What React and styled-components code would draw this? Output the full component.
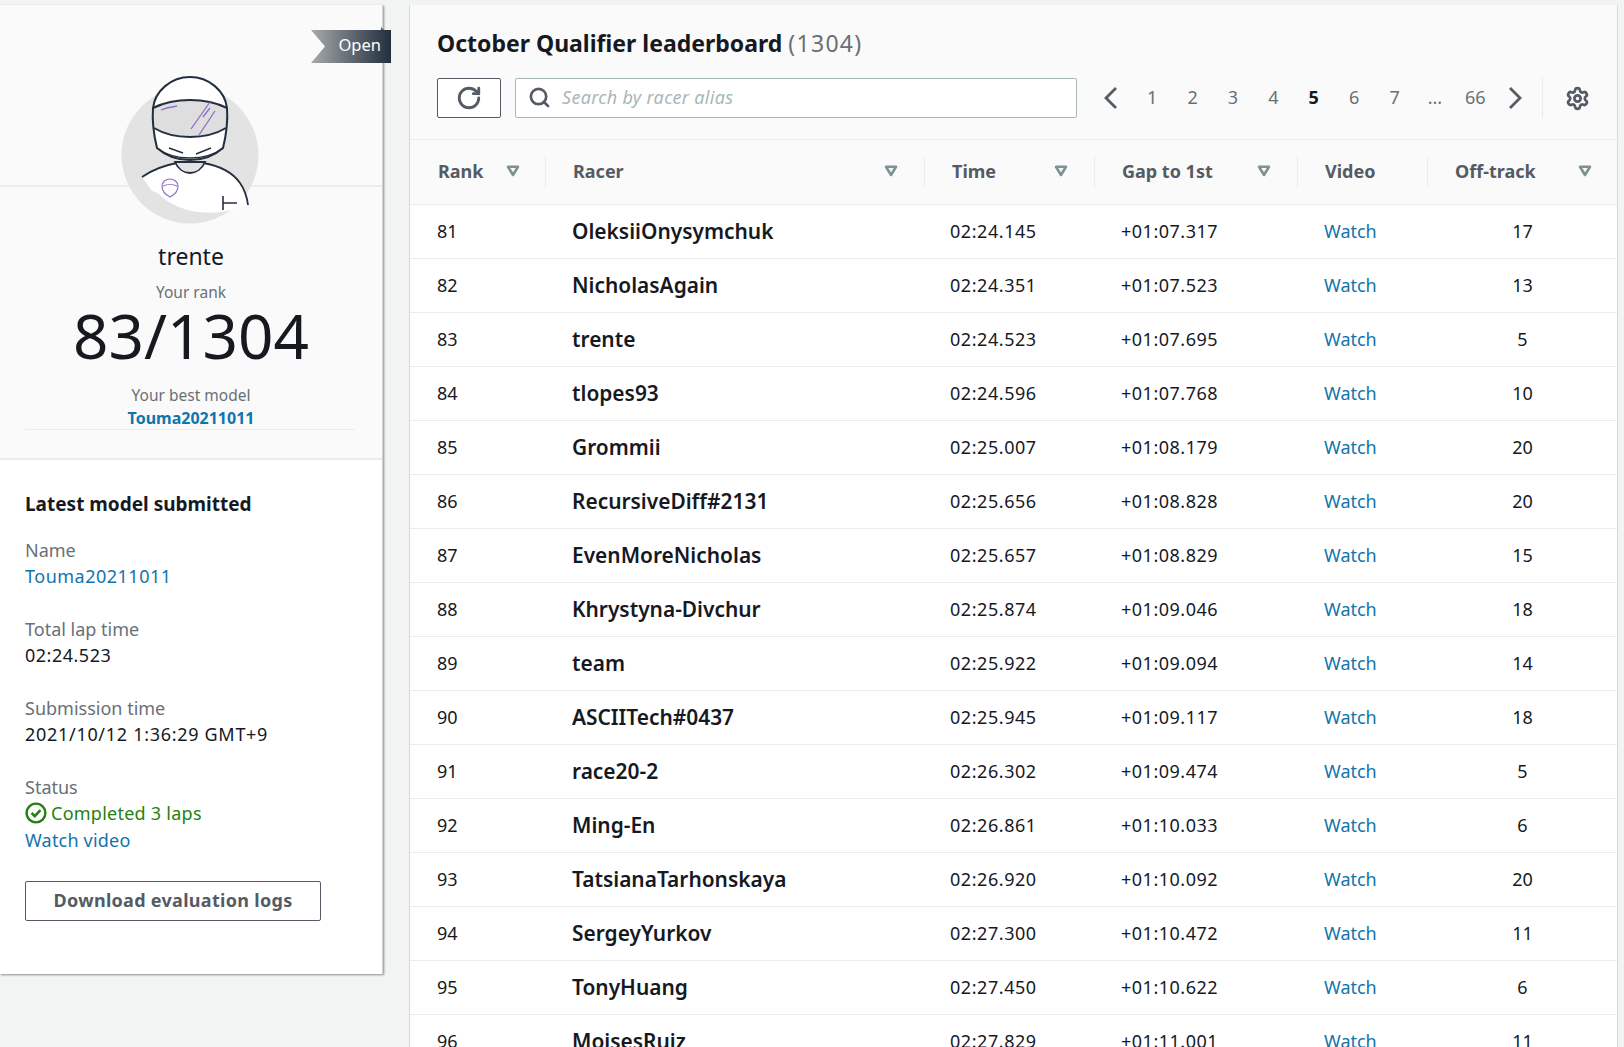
import styled, { createGlobalStyle } from 'styled-components'
import { RotateCw, Search, Settings } from 'lucide-react'

const GlobalStyle = createGlobalStyle`
  html, body {
    margin: 0;
    height: 100%;
    background: #f2f3f3;
    overflow: hidden;
  }
  * {
    box-sizing: border-box;
  }
  body {
    font-family: "Noto Sans", "Open Sans", sans-serif;
    color: #16191f;
  }
`

const Page = styled.div`
  display: flex;
  align-items: flex-start;
  gap: 26px;
  width: 1624px;
  height: 1047px;
  padding: 5px 6px 0 0;
  overflow: hidden;
`

const SidePanel = styled.aside`
  position: relative;
  flex: 0 0 383px;
  height: 969px;
  background: #fff;
  border-right: 1px solid #d0d3d4;
  box-shadow: 1px 1px 2px rgba(0, 28, 36, 0.45);
`

const Hero = styled.section`
  height: 455px;
  background: #fafafa;
  border-bottom: 2px solid #eaeded;
  display: flex;
  flex-direction: column;
  align-items: center;
`

const HeroBand = styled.div`
  align-self: stretch;
  flex: 0 0 182px;
  border-bottom: 2px solid #eaeded;
`

const Ribbon = styled.div`
  position: absolute;
  top: 25px;
  left: 311px;
  width: 80px;
  height: 33px;
  padding: 0 10px 4px 0;
  display: flex;
  align-items: center;
  justify-content: flex-end;
  font-size: 16.5px;
  color: #fff;
  background: linear-gradient(90deg, #a6abae 0%, #687078 45%, #232f3e 100%);
  clip-path: polygon(0 0, 100% 0, 100% 100%, 0 100%, 14px 50%);
`

const RibbonFold = styled.div`
  position: absolute;
  top: 22px;
  left: 381px;
  width: 0;
  height: 0;
  border-left: 3px solid #545b64;
  border-top: 3px solid transparent;
`

const AvatarBox = styled.div`
  position: absolute;
  top: 65px;
  left: 115px;
  width: 150px;
  height: 160px;
`

const Alias = styled.div`
  margin-top: 53px;
  font-size: 23px;
  line-height: 32px;
  color: #16191f;
`

const MutedLine = styled.div`
  margin-top: ${p => p.$top || 0}px;
  font-size: 15.5px;
  line-height: 22px;
  color: #687078;
`

const RankValue = styled.div`
  font-size: 62px;
  line-height: 64px;
  color: #16191f;
`

const BestModel = styled.a`
  margin-top: 1px;
  font-size: 16px;
  font-weight: 700;
  line-height: 22px;
  color: #1174ad;
`

const HeroDivider = styled.div`
  align-self: stretch;
  margin: 0 27px 0 25px;
  border-bottom: 1px solid #eaeded;
`

const Details = styled.section`
  padding: 30px 0 0 25px;
`

const DetailsTitle = styled.h2`
  margin: 0 0 19px;
  font-size: 19px;
  line-height: 28px;
  font-weight: 700;
  color: #16191f;
`

const Field = styled.div`
  margin-bottom: 27px;
  font-size: 18px;
  line-height: 26px;
`

const FieldLabel = styled.div`
  color: #687078;
`

const FieldValue = styled.div`
  color: #16191f;
  letter-spacing: ${p => p.$spacing || 0}px;
`

const TextLink = styled.a`
  color: #1174ad;
  letter-spacing: ${p => p.$spacing || 0}px;
`

const StatusLine = styled.div`
  display: flex;
  align-items: center;
  gap: 4px;
  margin-bottom: 1px;
  color: #257f12;
  letter-spacing: 0.25px;
`

const OutlineButton = styled.button`
  display: block;
  width: 296px;
  height: 40px;
  margin-top: 28px;
  padding: 0 0 3px;
  font-family: inherit;
  font-size: 18px;
  font-weight: 700;
  letter-spacing: 0.3px;
  color: #545b64;
  background: #fff;
  border: 1px solid #545b64;
  border-radius: 2px;
`

const Board = styled.main`
  flex: 1;
  height: 1042px;
  background: #fff;
  border-left: 1px solid #d5dbdb;
  border-right: 1px solid #d5dbdb;
  overflow: hidden;
`

const BoardHeader = styled.header`
  height: 135px;
  background: #fafafa;
  border-bottom: 1px solid #eaeded;
  padding: 22px 0 0 27px;
`

const BoardTitle = styled.h1`
  margin: 0;
  font-size: 23px;
  line-height: 32px;
  font-weight: 700;
  color: #16191f;
`

const TitleCount = styled.span`
  font-weight: 400;
  letter-spacing: 1.3px;
  color: #687078;
`

const Toolbar = styled.div`
  display: flex;
  align-items: center;
  margin-top: 19px;
`

const RefreshButton = styled.button`
  flex: 0 0 64px;
  height: 40px;
  display: flex;
  align-items: center;
  justify-content: center;
  color: #545b64;
  background: #fff;
  border: 1px solid #545b64;
  border-radius: 2px;
`

const SearchBox = styled.div`
  flex: 0 0 562px;
  height: 40px;
  margin-left: 14px;
  padding: 0 0 2px 12px;
  display: flex;
  align-items: center;
  gap: 11px;
  color: #545b64;
  background: #fff;
  border: 1px solid #aab7b8;
  border-radius: 2px;
`

const Placeholder = styled.span`
  font-size: 18px;
  font-style: italic;
  letter-spacing: 0.3px;
  color: #aab7b8;
`

const Pager = styled.nav`
  display: flex;
  align-items: center;
  margin-left: 19px;
  color: #545b64;
`

const PageNumber = styled.span`
  width: 40.4px;
  padding-bottom: 2px;
  text-align: center;
  font-size: 18px;
  font-weight: ${p => (p.$active ? 700 : 400)};
  color: ${p => (p.$active ? '#16191f' : '#687078')};
`

const ChevronBox = styled.svg`
  flex: 0 0 30px;
  margin: ${p => (p.$next ? '0 0 0 4px' : '0 6px 0 0')};
`

const ToolDivider = styled.div`
  width: 1px;
  height: 40px;
  margin: 0 22px 0 12px;
  background: #eaeded;
`

const ColumnGrid = styled.div`
  display: grid;
  grid-template-columns: 135px 379px 170px 203px 130px 1fr;
  align-items: center;
`

const HeadRow = styled(ColumnGrid)`
  height: 65px;
  background: #fafafa;
  border-bottom: 1px solid #eaeded;
`

const HeadCell = styled.div`
  height: 32px;
  padding: 0 ${p => p.$right || 0}px 2px ${p => p.$left || 27}px;
  display: flex;
  align-items: center;
  justify-content: space-between;
  font-size: 18px;
  font-weight: 700;
  color: #545b64;
  border-left: ${p => (p.$first ? 0 : '1px solid #eaeded')};
`

const Row = styled(ColumnGrid)`
  height: 54px;
  padding-bottom: 2px;
  font-size: 18px;
  color: #16191f;
  border-bottom: 1px solid #eaeded;
`

const Cell = styled.div`
  padding-left: ${p => p.$left || 27}px;
  letter-spacing: ${p => p.$spacing || 0}px;
`

const RacerCell = styled(Cell)`
  font-size: 20.9px;
  font-weight: 600;
`

const CountCell = styled.div`
  padding-left: 1px;
  text-align: center;
`

const columns = [
  { label: 'Rank', first: true, left: 28, right: 25, sort: true },
  { label: 'Racer', right: 26, sort: true },
  { label: 'Time', right: 26, sort: true },
  { label: 'Gap to 1st', right: 26, sort: true },
  { label: 'Video' },
  { label: 'Off-track', right: 25, sort: true },
]

const racers = [
  [81, 'OleksiiOnysymchuk', '02:24.145', '+01:07.317', 17],
  [82, 'NicholasAgain', '02:24.351', '+01:07.523', 13],
  [83, 'trente', '02:24.523', '+01:07.695', 5],
  [84, 'tlopes93', '02:24.596', '+01:07.768', 10],
  [85, 'Grommii', '02:25.007', '+01:08.179', 20],
  [86, 'RecursiveDiff#2131', '02:25.656', '+01:08.828', 20],
  [87, 'EvenMoreNicholas', '02:25.657', '+01:08.829', 15],
  [88, 'Khrystyna-Divchur', '02:25.874', '+01:09.046', 18],
  [89, 'team', '02:25.922', '+01:09.094', 14],
  [90, 'ASCIITech#0437', '02:25.945', '+01:09.117', 18],
  [91, 'race20-2', '02:26.302', '+01:09.474', 5],
  [92, 'Ming-En', '02:26.861', '+01:10.033', 6],
  [93, 'TatsianaTarhonskaya', '02:26.920', '+01:10.092', 20],
  [94, 'SergeyYurkov', '02:27.300', '+01:10.472', 11],
  [95, 'TonyHuang', '02:27.450', '+01:10.622', 6],
  [96, 'MoisesRuiz', '02:27.829', '+01:11.001', 11],
]

const pages = ['1', '2', '3', '4', '5', '6', '7', '...', '66']

const SortCaret = () => (
  <svg width="14" height="12" viewBox="0 0 14 12">
    <path d="M2 1.8h10L7 10z" fill="none" stroke="#7f9191" strokeWidth="2.6" strokeLinejoin="round" />
  </svg>
)

const CheckCircle = () => (
  <svg width="22" height="22" viewBox="0 0 22 22">
    <circle cx="11" cy="11" r="9.4" fill="none" stroke="#257f12" strokeWidth="2.4" />
    <path d="M6.6 11l3.2 3.2 5.6-6" fill="none" stroke="#257f12" strokeWidth="2.6" />
  </svg>
)

const PageChevron = ({ next }) => (
  <ChevronBox $next={next} width="30" height="30" viewBox="0 0 30 30">
    <path
      d={next ? 'M10 5l10 10-10 10' : 'M20 5L10 15l10 10'}
      fill="none"
      stroke="#545b64"
      strokeWidth="2.8"
    />
  </ChevronBox>
)

const Avatar = () => (
  <svg width="150" height="160" viewBox="0 0 150 160">
    <circle cx="75" cy="85" r="68.5" fill="#e3e3e3" />
    <path d="M27 107c10-7 24-12 35-14h26c18 3 30 10 37 20 5 7 7 14 8 22l-10 0 0 3c-14 5-30 6-46 3-14-3-27-10-34-18l-6-2z" fill="#fff" />
    <path d="M27 107c10-7 24-12 35-14M88 93c18 3 30 10 37 20 5 7 7 14 8 22" fill="none" stroke="#232f3e" strokeWidth="1.8" />
    <path d="M60 92c3 7 9 11 15 11s12-4 15-11z" fill="#e3e3e3" stroke="#232f3e" strokeWidth="1.8" />
    <path d="M38 38c2-17 18-31 37-31s35 14 37 31c1 14-1 28-4 40-9 8-20 12-33 12s-24-4-33-12c-3-12-5-26-4-40z" fill="#fff" />
    <path d="M38 38c2-17 18-31 37-31s35 14 37 31" fill="none" stroke="#232f3e" strokeWidth="2" />
    <path d="M38 38c10-5 24-8 37-8s27 3 37 8c1 6 0 12-1 20-10 6-24 9-36 9S49 64 39 58c-1-8-1-14-1-20z" fill="#dedede" />
    <path d="M38 38c10-5 24-8 37-8s27 3 37 8M39 58c10 6 24 9 36 9s26-3 36-9" fill="none" stroke="#232f3e" strokeWidth="2" />
    <path d="M38 38c-1 14 1 28 4 40 9 8 20 12 33 12s24-4 33-12c3-12 5-26 4-40" fill="none" stroke="#232f3e" strokeWidth="2" />
    <path d="M42 78c9 7 20 10 33 10s24-3 33-10" fill="none" stroke="#232f3e" strokeWidth="1.4" />
    <path d="M54 78l14 5M96 78l-15 6" fill="none" stroke="#232f3e" strokeWidth="1.4" />
    <path d="M46 40c5-2 10-3 16-4M76 59l19-27M84 65l16-24M88 47l7-9" fill="none" stroke="#8c6fc9" strokeWidth="1.3" />
    <path d="M47 116c0-4 4-7 8-7s8 3 8 7c0 5-4 9-8 11-4-2-8-6-8-11zM48 116c4-2 10-2 14 0" fill="none" stroke="#8c6fc9" strokeWidth="1.2" />
    <path d="M108 126v14M108 133h14" fill="none" stroke="#232f3e" strokeWidth="1.6" />
  </svg>
)

const App = () => (
  <Page>
    <GlobalStyle />
    <SidePanel>
      <RibbonFold />
      <Ribbon>Open</Ribbon>
      <Hero>
        <HeroBand />
        <Alias>trente</Alias>
        <MutedLine $top={9}>Your rank</MutedLine>
        <RankValue>83/1304</RankValue>
        <MutedLine $top={17}>Your best model</MutedLine>
        <BestModel>Touma20211011</BestModel>
        <HeroDivider />
      </Hero>
      <AvatarBox>
        <Avatar />
      </AvatarBox>
      <Details>
        <DetailsTitle>Latest model submitted</DetailsTitle>
        <Field>
          <FieldLabel>Name</FieldLabel>
          <TextLink $spacing={0.5}>Touma20211011</TextLink>
        </Field>
        <Field>
          <FieldLabel>Total lap time</FieldLabel>
          <FieldValue $spacing={0.5}>02:24.523</FieldValue>
        </Field>
        <Field>
          <FieldLabel>Submission time</FieldLabel>
          <FieldValue $spacing={0.7}>2021/10/12 1:36:29 GMT+9</FieldValue>
        </Field>
        <Field>
          <FieldLabel>Status</FieldLabel>
          <StatusLine>
            <CheckCircle />
            Completed 3 laps
          </StatusLine>
          <TextLink $spacing={0.2}>Watch video</TextLink>
        </Field>
        <OutlineButton>Download evaluation logs</OutlineButton>
      </Details>
    </SidePanel>
    <Board>
      <BoardHeader>
        <BoardTitle>
          October Qualifier leaderboard <TitleCount>(1304)</TitleCount>
        </BoardTitle>
        <Toolbar>
          <RefreshButton>
            <RotateCw size={26} strokeWidth={2.6} />
          </RefreshButton>
          <SearchBox>
            <Search size={23} strokeWidth={2.8} />
            <Placeholder>Search by racer alias</Placeholder>
          </SearchBox>
          <Pager>
            <PageChevron />
            {pages.map(page => (
              <PageNumber key={page} $active={page === '5'}>{page}</PageNumber>
            ))}
            <PageChevron next />
            <ToolDivider />
            <Settings size={25} strokeWidth={2.6} />
          </Pager>
        </Toolbar>
      </BoardHeader>
      <HeadRow>
        {columns.map(col => (
          <HeadCell key={col.label} $first={col.first} $left={col.left} $right={col.right}>
            {col.label}
            {col.sort && <SortCaret />}
          </HeadCell>
        ))}
      </HeadRow>
      {racers.map(([rank, name, time, gap, off]) => (
        <Row key={rank}>
          <Cell $left={27}>{rank}</Cell>
          <RacerCell>{name}</RacerCell>
          <Cell $left={26} $spacing={0.55}>{time}</Cell>
          <Cell $spacing={0.5}>{gap}</Cell>
          <Cell><TextLink>Watch</TextLink></Cell>
          <CountCell>{off}</CountCell>
        </Row>
      ))}
    </Board>
  </Page>
)

export default App
